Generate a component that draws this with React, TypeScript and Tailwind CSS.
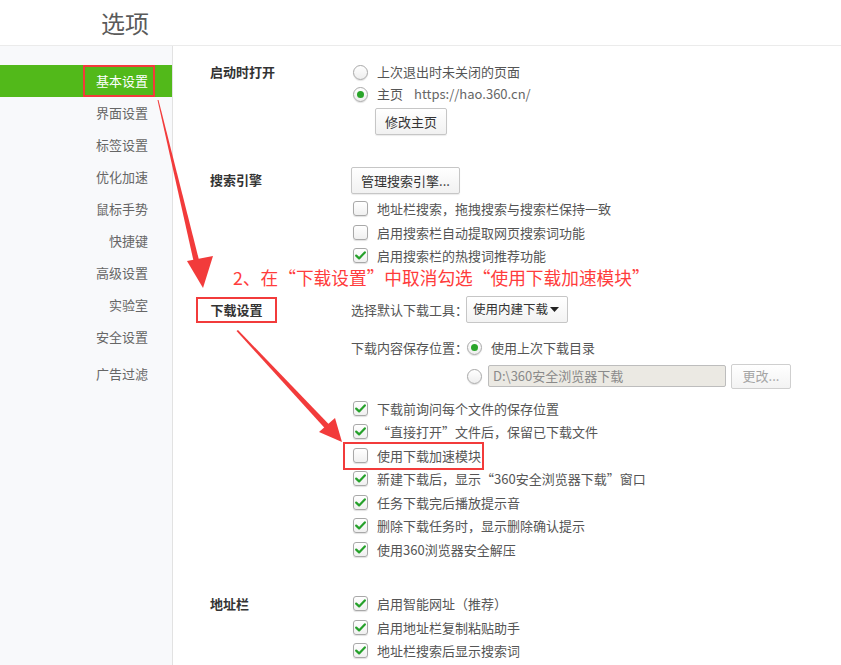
import React from "react";

const font = { fontFamily: '"Noto Sans CJK SC", "Noto Sans", sans-serif' };

const navItems = [
  "基本设置",
  "界面设置",
  "标签设置",
  "优化加速",
  "鼠标手势",
  "快捷键",
  "高级设置",
  "实验室",
  "安全设置",
];

function Radio({ checked }: { checked?: boolean }) {
  return (
    <span className="flex h-[15px] w-[15px] shrink-0 items-center justify-center rounded-full border border-[#a9a9a9] bg-gradient-to-b from-white to-[#eeeeee] shadow-[0_1px_1px_rgba(0,0,0,0.12)]">
      {checked && <span className="h-[7px] w-[7px] rounded-full bg-[#2aa52a]" />}
    </span>
  );
}

function Checkbox({ checked }: { checked?: boolean }) {
  return (
    <span className="flex h-[15px] w-[15px] shrink-0 items-center justify-center rounded-[3px] border border-[#a9a9a9] bg-gradient-to-b from-white to-[#f0f0f0] shadow-[0_1px_1px_rgba(0,0,0,0.12)]">
      {checked && (
        <svg width="11" height="9" viewBox="0 0 11 9">
          <path
            d="M1.2 4.6 L4.1 7.4 L9.8 1.4"
            fill="none"
            stroke="#26a12b"
            strokeWidth="2.2"
            strokeLinecap="round"
            strokeLinejoin="round"
          />
        </svg>
      )}
    </span>
  );
}

function CheckRow({ label, checked }: { label: string; checked?: boolean }) {
  return (
    <div className="flex h-[23.5px] items-center gap-[9px] pl-[2px]">
      <Checkbox checked={checked} />
      <span className="whitespace-nowrap">{label}</span>
    </div>
  );
}

function Button({ children, className = "" }: { children: React.ReactNode; className?: string }) {
  return (
    <button
      className={`flex h-[27px] items-center justify-center rounded-[2px] border border-[#c6c6c6] bg-gradient-to-b from-white to-[#f1f1f1] text-[13px] text-[#333] shadow-[0_1px_1px_rgba(0,0,0,0.08)] ${className}`}
    >
      {children}
    </button>
  );
}

function Section({
  label,
  children,
  className = "",
  labelClass = "",
}: {
  label: React.ReactNode;
  children: React.ReactNode;
  className?: string;
  labelClass?: string;
}) {
  return (
    <div className={`flex ${className}`}>
      <div className={`w-[141px] shrink-0 font-bold text-[#333] ${labelClass}`}>{label}</div>
      <div className="flex flex-1 flex-col">{children}</div>
    </div>
  );
}

export default function App() {
  return (
    <div
      className="relative h-[665px] w-[841px] overflow-hidden bg-white text-[13px] text-[#555]"
      style={font}
    >
      <div className="flex h-[46px] items-center border-b border-[#ebebeb] pl-[101px]">
        <h1 className="text-[24px] leading-none text-[#5a5a5a]">选项</h1>
      </div>

      <div className="flex h-[619px]">
        {/* left navigation */}
        <nav className="w-[173px] shrink-0 border-r border-[#e2e2e2] bg-[#f8f9fb] pt-[19px]">
          {navItems.map((item, i) => (
            <div
              key={item}
              className={`relative flex h-8 items-center justify-end pr-[24px] text-[13px] ${
                i === 0 ? "bg-[#52b91a] text-white" : "text-[#666]"
              }`}
            >
              {item}
              {i === 0 && (
                <span className="absolute left-[83px] top-0 h-[32px] w-[72px] border-2 border-[#f23b3b]" />
              )}
            </div>
          ))}
          <div className="mt-[5px] flex h-8 items-center justify-end pr-[24px] text-[#666]">广告过滤</div>
        </nav>

        {/* settings content */}
        <main className="flex flex-1 flex-col pl-[37px] pt-[15px]">
          <Section label="启动时打开" labelClass="flex h-[22px] items-center">
            <div className="flex h-[22px] items-center gap-[9px] pl-[2px]">
              <Radio />
              <span>上次退出时未关闭的页面</span>
            </div>
            <div className="flex h-[22px] items-center gap-[9px] pl-[2px]">
              <Radio checked />
              <span>主页</span>
              <span className="ml-[2px] text-[#666]">https://hao.360.cn/</span>
            </div>
            <Button className="ml-[24px] mt-[3px] w-[72px]">修改主页</Button>
          </Section>

          <Section label="搜索引擎" className="mt-[32px]" labelClass="flex h-[26px] items-center">
            <Button className="mb-[3px] h-[26px] w-[109px]">管理搜索引擎...</Button>
            <CheckRow label="地址栏搜索，拖拽搜索与搜索栏保持一致" />
            <CheckRow label="启用搜索栏自动提取网页搜索词功能" />
            <CheckRow label="启用搜索栏的热搜词推荐功能" checked />
          </Section>

          <Section
            label={
              <span className="relative -ml-[14px] flex h-[26px] w-[81px] items-center justify-center border-2 border-[#f23b3b]">
                下载设置
              </span>
            }
            className="mt-[29px]"
          >
            <div className="flex h-[26px] items-center">
              <span className="w-[115px] whitespace-nowrap">选择默认下载工具：</span>
              <div className="flex h-[27px] w-[102px] items-center justify-between whitespace-nowrap rounded-[2px] border border-[#c6c6c6] bg-gradient-to-b from-white to-[#f3f3f3] pl-[6px] pr-[8px] text-[12.5px] text-[#333]">
                <span>使用内建下载</span>
                <svg width="9" height="5" viewBox="0 0 9 5">
                  <path d="M0 0 H9 L4.5 5 Z" fill="#222" />
                </svg>
              </div>
            </div>
            <div className="mt-[14px] flex h-[22px] items-center">
              <span className="w-[116px] whitespace-nowrap">下载内容保存位置：</span>
              <Radio checked />
              <span className="ml-[9px]">使用上次下载目录</span>
            </div>
            <div className="mt-[6px] flex h-[23px] items-center">
              <span className="w-[116px]" />
              <Radio />
              <div className="ml-[6px] flex h-[22px] w-[238px] items-center rounded-[2px] border border-[#bdbdbd] bg-[#ebe9e3] pl-[4px] text-[#8a8a8a]">
                D:\360安全浏览器下载
              </div>
              <button className="ml-[5px] flex h-[25px] w-[60px] items-center justify-center rounded-[2px] border border-[#cfcfcf] bg-gradient-to-b from-white to-[#f3f3f3] text-[13px] text-[#a5a5a5]">
                更改...
              </button>
            </div>
            <div className="mt-[9px] flex flex-col">
              <CheckRow label="下载前询问每个文件的保存位置" checked />
              <CheckRow label="“直接打开”文件后，保留已下载文件" checked />
              <div className="relative">
                <CheckRow label="使用下载加速模块" />
                <span className="absolute -left-[8px] top-[-2px] h-[28px] w-[141px] border-2 border-[#f23b3b]" />
              </div>
              <CheckRow label="新建下载后，显示“360安全浏览器下载”窗口" checked />
              <CheckRow label="任务下载完后播放提示音" checked />
              <CheckRow label="删除下载任务时，显示删除确认提示" checked />
              <CheckRow label="使用360浏览器安全解压" checked />
            </div>
          </Section>

          <Section label="地址栏" className="mt-[31px]" labelClass="flex h-[24px] items-center">
            <CheckRow label="启用智能网址（推荐）" checked />
            <CheckRow label="启用地址栏复制粘贴助手" checked />
            <CheckRow label="地址栏搜索后显示搜索词" checked />
          </Section>
        </main>
      </div>

      {/* annotation overlay */}
      <div className="absolute left-[233px] top-[268px] whitespace-nowrap text-[17.7px] leading-[19px] text-[#ff3c3c]">
        2、在“下载设置”中取消勾选“使用下载加速模块”
      </div>
      <svg className="pointer-events-none absolute left-0 top-0" width="841" height="665">
        <polygon points="157.5,100 158.5,100 199.5,262 194,263" fill="#f23b3b" />
        <polygon points="187,261 213,256 203,288" fill="#f23b3b" />
        <polygon points="236.5,331 238,330 330.5,426 326,429.5" fill="#f23b3b" />
        <polygon points="319,432 335,418 342,442" fill="#f23b3b" />
      </svg>
    </div>
  );
}
